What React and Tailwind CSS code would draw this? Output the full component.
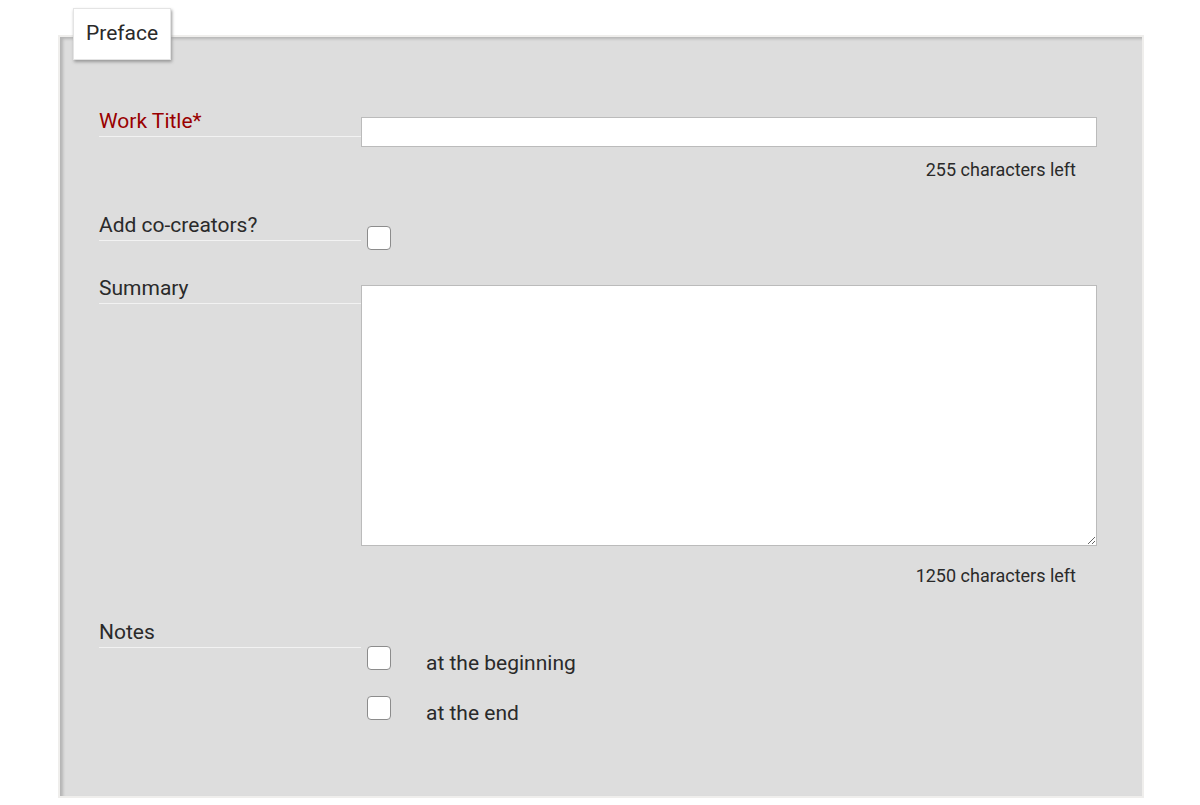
export default function App() {
  const font = { fontFamily: 'Roboto, "Liberation Sans", sans-serif' };
  return (
    <div className="min-h-[805px] w-[1200px] bg-white" style={font}>
      <div className="pt-[35px] pl-[58px]">
        <div className="relative w-[1086px] h-[763px] bg-[#dddddd] border-2 border-[#efeeec] shadow-[inset_3px_2px_3px_#b5b5b5] text-[#2a2a2a]">
          <div className="absolute left-[13px] top-[-29px] w-[98px] h-[52px] bg-white border border-[#e4e4e4] shadow-[1px_2px_3px_#999] flex items-center pl-[12px] text-[21px]">
            Preface
          </div>
          <div className="pl-[39px] pr-[45px] pt-[69px]">
            {/* Work title */}
            <div className="flex items-start">
              <div className="w-[262px] shrink-0 leading-[30px] border-b border-[#f2f2f2] text-[21px] text-[#990000]">
                Work Title*
              </div>
              <div className="flex-1 pt-[11px]">
                <input className="block w-full h-[30px] bg-white border border-[#bbbbbb] outline-none" />
                <div className="mt-[11px] text-right pr-[21px] text-[18px] leading-[24px]">255 characters left</div>
              </div>
            </div>
            {/* co-creators */}
            <div className="flex items-start mt-[28px]">
              <div className="w-[262px] shrink-0 leading-[30px] border-b border-[#f2f2f2] text-[21px]">
                Add co-creators?
              </div>
              <div className="flex-1 pt-[16px] pl-[6px]">
                <div className="w-[24px] h-[24px] bg-white border border-[#8c8c8c] rounded-[4px]" />
              </div>
            </div>
            {/* Summary */}
            <div className="flex items-start mt-[23px]">
              <div className="w-[262px] shrink-0 leading-[30px] border-b border-[#f2f2f2] text-[21px]">
                Summary
              </div>
              <div className="flex-1 pt-[12px]">
                <textarea className="block w-full h-[261px] bg-white border border-[#bbbbbb] outline-none" />
                <div className="mt-[18px] text-right pr-[21px] text-[18px] leading-[24px]">1250 characters left</div>
              </div>
            </div>
            {/* Notes */}
            <div className="flex items-start mt-[29px]">
              <div className="w-[262px] shrink-0 leading-[30px] border-b border-[#f2f2f2] text-[21px]">
                Notes
              </div>
              <div className="flex-1 pt-[29px] pl-[6px] flex flex-col gap-[20px]">
                <div className="flex items-start">
                  <div className="w-[24px] h-[24px] bg-white border border-[#8c8c8c] rounded-[4px] shrink-0" />
                  <span className="ml-[35px] mt-[4px] text-[21px] leading-[26px]">at the beginning</span>
                </div>
                <div className="flex items-start">
                  <div className="w-[24px] h-[24px] bg-white border border-[#8c8c8c] rounded-[4px] shrink-0" />
                  <span className="ml-[35px] mt-[4px] text-[21px] leading-[26px]">at the end</span>
                </div>
              </div>
            </div>
          </div>
        </div>
      </div>
    </div>
  );
}
